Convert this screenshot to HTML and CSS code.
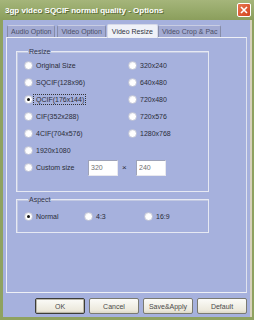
FILE: index.html
```html
<!DOCTYPE html>
<html lang="en">
<head>
    <meta charset="UTF-8">
    <title>3gp video SQCIF normal quality - Options</title>
    <link rel="stylesheet" href="styles.css">
</head>
<body>
    <div class="window">
        <div class="titlebar">
            <span class="title">3gp video SQCIF normal quality - Options</span>
            <span class="close">
                <svg width="8" height="8" viewBox="0 0 8 8"><path d="M1 1L7 7M7 1L1 7" stroke="#fff" stroke-width="1.6"/></svg>
            </span>
        </div>
        <div class="client">
            <div class="tabs">
                <span class="tab">Audio Option</span>
                <span class="tab">Video Option</span>
                <span class="tab active">Video Resize</span>
                <span class="tab">Video Crop &amp; Pac</span>
            </div>
            <div class="panel">
                <fieldset class="group resize">
                    <legend>Resize</legend>
                    <div class="radio-grid">
                        <label class="option"><span class="radio"></span>Original Size</label>
                        <label class="option"><span class="radio"></span>320x240</label>
                        <label class="option"><span class="radio"></span>SQCIF(128x96)</label>
                        <label class="option"><span class="radio"></span>640x480</label>
                        <label class="option"><span class="radio checked"></span><span class="focus">QCIF(176x144)</span></label>
                        <label class="option"><span class="radio"></span>720x480</label>
                        <label class="option"><span class="radio"></span>CIF(352x288)</label>
                        <label class="option"><span class="radio"></span>720x576</label>
                        <label class="option"><span class="radio"></span>4CIF(704x576)</label>
                        <label class="option"><span class="radio"></span>1280x768</label>
                        <label class="option"><span class="radio"></span>1920x1080</label>
                        <span></span>
                        <div class="option custom">
                            <span class="radio"></span>
                            <span class="custom-label">Custom size</span>
                            <input class="field" type="text" value="320">
                            <span class="times">×</span>
                            <input class="field" type="text" value="240">
                        </div>
                    </div>
                </fieldset>
                <fieldset class="group aspect">
                    <legend>Aspect</legend>
                    <div class="aspect-row">
                        <label class="option"><span class="radio checked"></span>Normal</label>
                        <label class="option"><span class="radio"></span>4:3</label>
                        <label class="option"><span class="radio"></span>16:9</label>
                    </div>
                </fieldset>
            </div>
            <div class="buttons">
                <button class="btn default-btn">OK</button>
                <button class="btn">Cancel</button>
                <button class="btn">Save&amp;Apply</button>
                <button class="btn">Default</button>
            </div>
        </div>
    </div>
</body>
</html>
```

FILE: styles.css
```css
body {
    margin: 0;
    font-family: "Liberation Sans", Arial, sans-serif;
    font-size: 7px;
    color: #2b2d38;
}

.window {
    width: 254px;
    height: 320px;
    box-sizing: border-box;
    padding: 0 2px 3px 3px;
    background-color: #8fa260;
    display: flex;
    flex-direction: column;
}

.titlebar {
    height: 20px;
    margin: 0 -2px 0 -3px;
    padding: 0 3px 0 5px;
    display: flex;
    align-items: center;
    justify-content: space-between;
    background: linear-gradient(#a5b57a, #95a868 60%, #8b9e5c);
}

.title {
    color: #fff;
    font-weight: bold;
    font-size: 8px;
    text-shadow: 1px 1px 0 #5f6e3c;
}

.close {
    width: 12px;
    height: 12px;
    border: 1px solid #fff;
    border-radius: 2px;
    background: linear-gradient(135deg, #e8774f, #d2431d);
    display: flex;
    align-items: center;
    justify-content: center;
}

.client {
    flex: 1;
    background-color: #a6b1dd;
    border-right: 2px solid #d8d2bc;
    display: flex;
    flex-direction: column;
}

.tabs {
    display: flex;
    align-items: flex-end;
    height: 17px;
    padding-left: 4px;
}

.tab {
    height: 12px;
    line-height: 12px;
    padding: 0 3px;
    margin-right: 2px;
    background-color: #a3abd3;
    border: 1px solid #868ca8;
    border-bottom: none;
    border-top-color: #c9cde3;
    border-radius: 2px 2px 0 0;
    color: #4b4f66;
    box-sizing: border-box;
}

.tab.active {
    height: 14px;
    line-height: 14px;
    margin: 0 0 -1px -1px;
    padding: 0 4px;
    background-color: #eff1f8;
    border-color: #d6d9e8;
    color: #30323e;
    position: relative;
}

.tab.active + .tab {
    margin-left: 0;
}

.panel {
    margin-left: 3px;
    width: 241px;
    height: 256px;
    box-sizing: border-box;
    border: 1px solid #eef0f6;
    border-right-color: #dfe2ee;
    padding: 9px 0 0 9px;
}

.group {
    width: 193px;
    box-sizing: border-box;
    margin: 0;
    border: 1px solid #e6e9f3;
    box-shadow: inset 1px 1px 0 #c1c8e2;
    padding: 0 0 0 7px;
}

.group legend {
    padding: 0 1px;
    margin-left: 4px;
    line-height: 9px;
    color: #33364a;
}

.resize {
    height: 145px;
    padding-top: 1px;
}

.aspect {
    height: 38px;
    margin-top: 3px;
    padding-top: 4px;
}

.radio-grid {
    display: grid;
    grid-template-columns: 104px 1fr;
    grid-auto-rows: 17px;
}

.option {
    display: flex;
    align-items: center;
    white-space: nowrap;
}

.radio {
    width: 9px;
    height: 9px;
    box-sizing: border-box;
    border-radius: 50%;
    border: 1px solid #c6c9d8;
    background: radial-gradient(circle at 60% 60%, #fff 45%, #dcdde6);
    margin-right: 3px;
    display: flex;
    align-items: center;
    justify-content: center;
    flex: none;
}

.radio.checked::after {
    content: "";
    width: 3px;
    height: 3px;
    border-radius: 50%;
    background-color: #111;
}

.focus {
    outline: 1px dotted #333;
    outline-offset: 1px;
    margin-left: -1px;
    padding-left: 1px;
}

.custom {
    grid-column: 1 / -1;
}

.custom-label {
    width: 52px;
}

.field {
    width: 30px;
    height: 16px;
    box-sizing: border-box;
    margin: 0;
    padding: 0 2px;
    border: 1px solid;
    border-color: #9ea3b8 #e8e8ee #e8e8ee #9ea3b8;
    background-color: #fff;
    font: inherit;
    color: #707070;
}

.times {
    width: 18px;
    box-sizing: border-box;
    padding-left: 4px;
    font-size: 8px;
}

.aspect-row {
    display: flex;
    height: 17px;
}

.aspect-row .option {
    width: 60px;
}

.buttons {
    display: flex;
    justify-content: flex-end;
    gap: 4px;
    padding: 5px 3px 0 0;
}

.btn {
    width: 50px;
    height: 16px;
    padding: 0;
    border: 1px solid #7a7a72;
    border-radius: 2px;
    background: linear-gradient(#fbfbf8, #ece9dc 80%, #dcd8c6);
    font: inherit;
    color: #4a4a4a;
}

.default-btn {
    border-color: #3c3c38;
    box-shadow: inset 0 0 0 1px #b9b6a8;
}
```
